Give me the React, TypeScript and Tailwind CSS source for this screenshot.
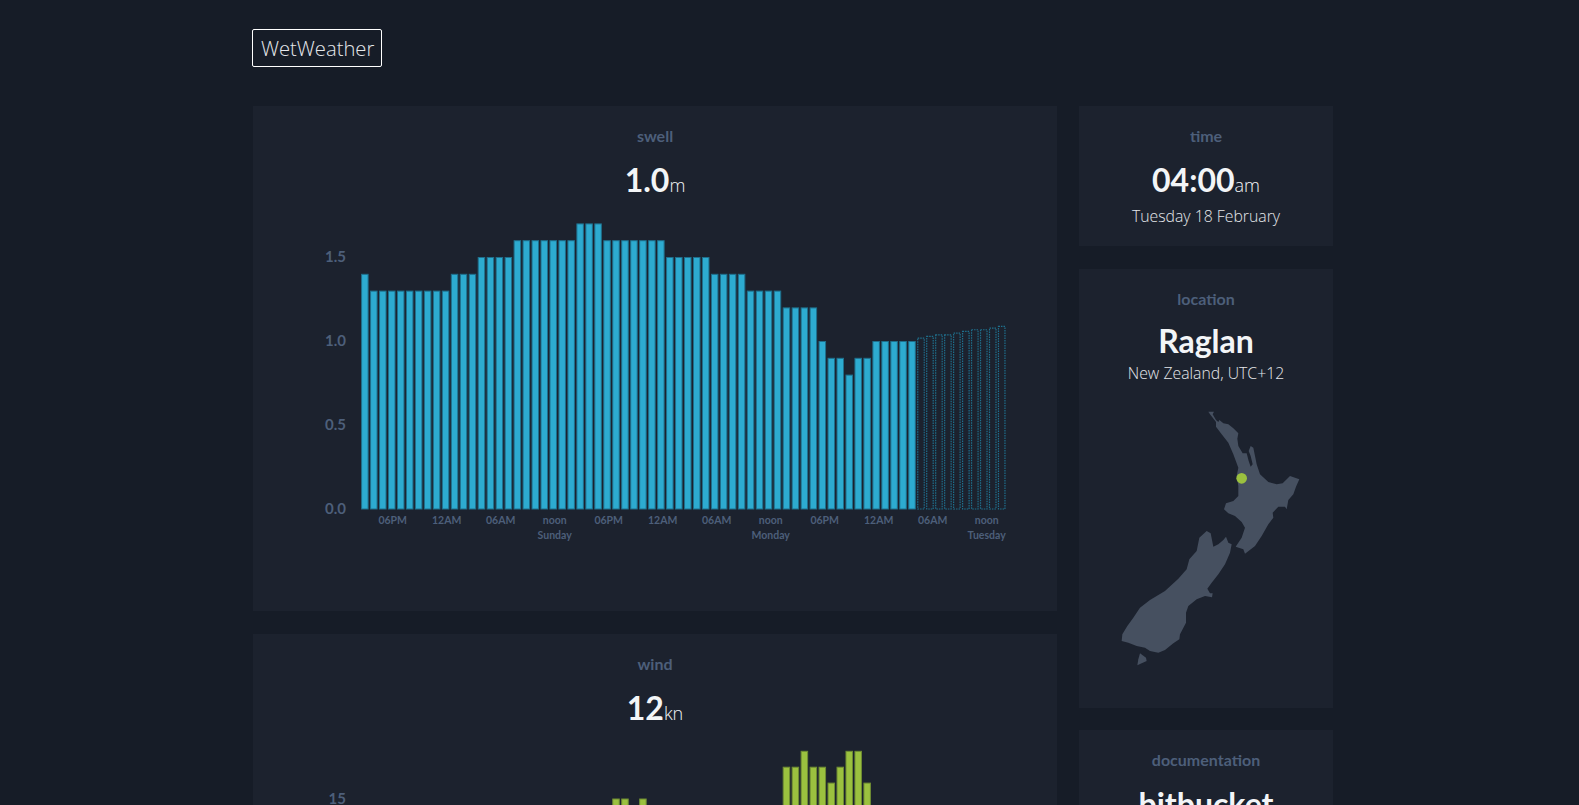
const swell = [1.4,1.3,1.3,1.3,1.3,1.3,1.3,1.3,1.3,1.3,1.4,1.4,1.4,1.5,1.5,1.5,1.5,1.6,1.6,1.6,1.6,1.6,1.6,1.6,1.7,1.7,1.7,1.6,1.6,1.6,1.6,1.6,1.6,1.6,1.5,1.5,1.5,1.5,1.5,1.4,1.4,1.4,1.4,1.3,1.3,1.3,1.3,1.2,1.2,1.2,1.2,1.0,0.9,0.9,0.8,0.9,0.9,1.0,1.0,1.0,1.0,1.0];
const swellForecast = [1.02,1.03,1.04,1.04,1.05,1.06,1.07,1.07,1.08,1.09];
const wind = [6,6,7,7,8,8,9,9,10,10,10,11,11,12,12,12,13,13,13,14,14,14,14,14,14,14,14,14,15,15,14,15,14,14,14,14,13,13,13,13,13,13,13,13,14,14,14,17,17,18,17,17,16,17,18,18,16,14,14,13,12,12];
const windForecast = [12,12,12,11,11,11,10,10,10,10];

const ticks = ['06PM','12AM','06AM','noon','06PM','12AM','06AM','noon','06PM','12AM','06AM','noon'];
const days: Record<number, string> = { 3: 'Sunday', 7: 'Monday', 11: 'Tuesday' };

function Chart({ data, forecast, scale, yTicks, fill, stroke }: { data: number[]; forecast: number[]; scale: number; yTicks: string[]; fill: string; stroke: string }) {
  const base = 294;
  const pitch = 8.97;
  return (
    <svg viewBox="0 0 804 340" className="block w-[804px] h-[340px] font-['Lato','Noto_Sans',sans-serif] font-bold">
      {yTicks.map((t) => (
        <text key={t} x="93" y={base - Number(t) * scale + 5} textAnchor="end" fontSize="15" fill="#4d5f7a">{t}</text>
      ))}
      {data.map((v, i) => (
        <rect key={i} x={108.6 + i * pitch} y={base - v * scale + 0.5} width={6.5} height={v * scale - 0.5} fill={fill} stroke={stroke} strokeWidth="1" />
      ))}
      {forecast.map((v, i) => (
        <rect key={i} x={108.6 + (data.length + i) * pitch} y={base - v * scale + 0.5} width={6.5} height={v * scale - 0.5} fill="none" stroke={stroke} strokeWidth="1.2" strokeDasharray="1.5 1" />
      ))}
      {ticks.map((t, i) => (
        <text key={i} x={139.7 + i * 54} y={base + 15} textAnchor="middle" fontSize="10.5" fill="#4d5f7a">{t}</text>
      ))}
      {Object.entries(days).map(([k, d]) => (
        <text key={d} x={139.7 + Number(k) * 54} y={base + 30} textAnchor="middle" fontSize="10.5" fill="#4d5f7a">{d}</text>
      ))}
    </svg>
  );
}

function Label({ children }: { children: string }) {
  return <div className="h-5 leading-5 text-[16px] font-bold text-[#4d5f7a] font-['Lato','Noto_Sans',sans-serif]">{children}</div>;
}

function Big({ value, unit }: { value: string; unit?: string }) {
  return (
    <div className="h-10 font-['Lato','Noto_Sans',sans-serif] text-[#f3f5f7] text-[32px] leading-10 font-bold">
      {value}
      {unit && <span className="text-[18px] leading-none font-light font-['Open_Sans',sans-serif]">{unit}</span>}
    </div>
  );
}

function Card({ title, value, unit, children, className, valueClassName = 'mt-[14px]' }: { title: string; value: string; unit?: string; children?: React.ReactNode; className: string; valueClassName?: string }) {
  return (
    <section className={`bg-[#1c222e] flex flex-col items-center pt-5 ${className}`}>
      <Label>{title}</Label>
      <div className={valueClassName}>
        <Big value={value} unit={unit} />
      </div>
      {children}
    </section>
  );
}

function NzMap() {
  return (
    <svg viewBox="0 0 720 855" className="block w-[240px] h-[285px]">
      <path fill="#465060" d="M355 47L372 47L368 55L378 72L385 78L388 72L400 82L415 85L430 97L445 112L442 128L445 150L458 172L470 172L476 195L482 212L488 205L482 180L476 165L482 150L490 155L495 180L500 205L510 235L535 258L560 265L578 262L600 240L628 250L618 272L610 295L595 312L590 340L585 332L565 332L548 350L550 365L535 385L515 420L495 450L465 473L460 460L437 452L455 425L465 395L455 378L435 360L415 352L402 340L408 322L430 315L445 300L445 270L440 240L445 215L430 175L415 140L395 115L378 92L378 78L360 55Z" />
      <path fill="#465060" d="M350 405L362 412L370 452L385 445L400 432L408 422L415 440L425 445L420 470L405 505L385 535L365 560L352 578L360 592L368 592L366 604L345 600L320 610L295 630L288 650L288 680L270 715L268 730L250 742L225 762L205 770L180 765L165 755L140 750L115 740L95 735L97 715L112 690L130 665L150 635L180 612L225 585L265 548L290 520L298 490L320 465L328 425Z" />
      <path fill="#465060" d="M150 772L168 785L170 795L155 802L142 808L145 790Z" />
      <circle cx="455" cy="247" r="16" fill="#9bc13f" />
    </svg>
  );
}

export default function App() {
  return (
    <div className="h-screen overflow-hidden bg-[#161c27] pl-[252px] pt-[29px] font-['Open_Sans',sans-serif]">
      <div className="w-[130px] h-[38px] leading-[37px] px-2 border border-white rounded-[2px] text-[20.2px] font-light text-[#e5e7eb] whitespace-nowrap">WetWeather</div>
      <div className="mt-[39px] ml-px flex gap-[22px] items-start">
        <div className="w-[804px] flex flex-col gap-[23px]">
          <Card title="swell" value="1.0" unit="m" className="h-[505px]">
            <div className="mt-[15px]">
              <Chart data={swell} forecast={swellForecast} scale={168} yTicks={['0.0','0.5','1.0','1.5']} fill="#2dabd0" stroke="#1f6f8c" />
            </div>
          </Card>
          <Card title="wind" value="12" unit="kn" className="h-[505px]">
            <div className="mt-[15px]">
              <Chart data={wind} forecast={windForecast} scale={15.9} yTicks={['0','5','10','15']} fill="#9bc13f" stroke="#6f8c33" />
            </div>
          </Card>
        </div>
        <div className="w-[254px] flex flex-col">
          <Card title="time" value="04:00" unit="am" className="h-[140px]">
            <div className="mt-[4px] text-[15.8px] leading-6 font-light text-[#e5e7eb]">Tuesday 18 February</div>
          </Card>
          <Card title="location" value="Raglan" className="h-[439px] mt-[23px]" valueClassName="mt-[12px]">
            <div className="text-[15.8px] leading-6 font-light text-[#e5e7eb]">New Zealand, UTC+12</div>
            <div className="mt-[11px] ml-[8px]"><NzMap /></div>
          </Card>
          <Card title="documentation" value="bitbucket" className="h-[140px] mt-[22px]" />
        </div>
      </div>
    </div>
  );
}
